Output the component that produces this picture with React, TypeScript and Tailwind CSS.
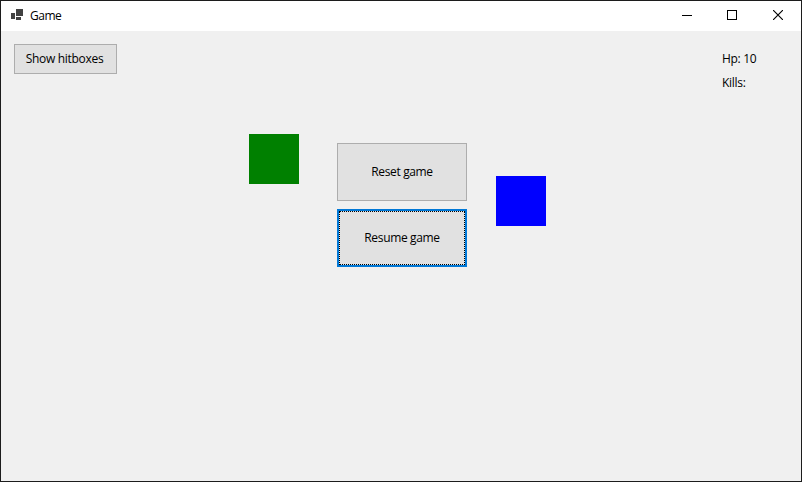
import type { ReactNode } from "react";

function AppIcon() {
  return (
    <svg className="mb-[3px]" width="12" height="11" viewBox="0 0 12 11" shapeRendering="crispEdges" fill="#424242">
      <rect x="0" y="4" width="4" height="6" />
      <rect x="5" y="0" width="7" height="7" />
      <rect x="5" y="8" width="5" height="3" />
    </svg>
  );
}

function CaptionButton({ label, children }: { label: string; children: ReactNode }) {
  return (
    <button aria-label={label} className="flex h-[30px] w-[46px] items-center justify-center pb-[2px] first:pl-[2px]">
      <svg width="10" height="10" viewBox="0 0 10 10" fill="none" stroke="#000">
        {children}
      </svg>
    </button>
  );
}

function TitleBar() {
  return (
    <header className="flex h-[30px] items-center bg-white pl-[10px]">
      <AppIcon />
      <span className="ml-[7px] text-xs tracking-[-0.5px]">Game</span>
      <div className="ml-auto flex">
        <CaptionButton label="Minimize">
          <path d="M0 5.5H10" shapeRendering="crispEdges" />
        </CaptionButton>
        <CaptionButton label="Maximize">
          <rect x="0.5" y="0.5" width="9" height="9" shapeRendering="crispEdges" />
        </CaptionButton>
        <CaptionButton label="Close">
          <path d="M0 0L10 10M10 0L0 10" strokeWidth="1.15" />
        </CaptionButton>
      </div>
    </header>
  );
}

export default function App() {
  return (
    <div className="flex h-[482px] w-[802px] flex-col overflow-hidden border border-[#1c1c1c] bg-[#f0f0f0] font-['Open_Sans','Noto_Sans',sans-serif] text-xs text-black">
      <TitleBar />
      <main className="relative flex-1">
        <div className="flex items-start justify-between pl-[13px] pt-[13px]">
          <button className="h-[30px] w-[103px] border border-[#adadad] bg-[#e1e1e1] pr-[2px] tracking-[-0.3px]">
            Show hitboxes
          </button>
          <div className="flex w-[79px] flex-col gap-2 pt-[7px] leading-4 tracking-[-0.3px]">
            <span>Hp: 10</span>
            <span>Kills:</span>
          </div>
        </div>
        <div className="ml-[336px] mt-[52px] flex w-[130px] flex-col gap-2">
          <button className="h-[58px] border border-[#adadad] bg-[#e1e1e1] tracking-[-0.35px]">
            Reset game
          </button>
          <button className="h-[58px] border-2 border-[#0078d7] bg-[#e1e1e1] tracking-[-0.35px]">
            <span className="flex h-full items-center justify-center border border-dotted border-black">
              Resume game
            </span>
          </button>
        </div>
        <div className="absolute left-[248px] top-[103px] size-[50px] bg-[#008000]" />
        <div className="absolute left-[495px] top-[145px] size-[50px] bg-[#0000ff]" />
      </main>
    </div>
  );
}
